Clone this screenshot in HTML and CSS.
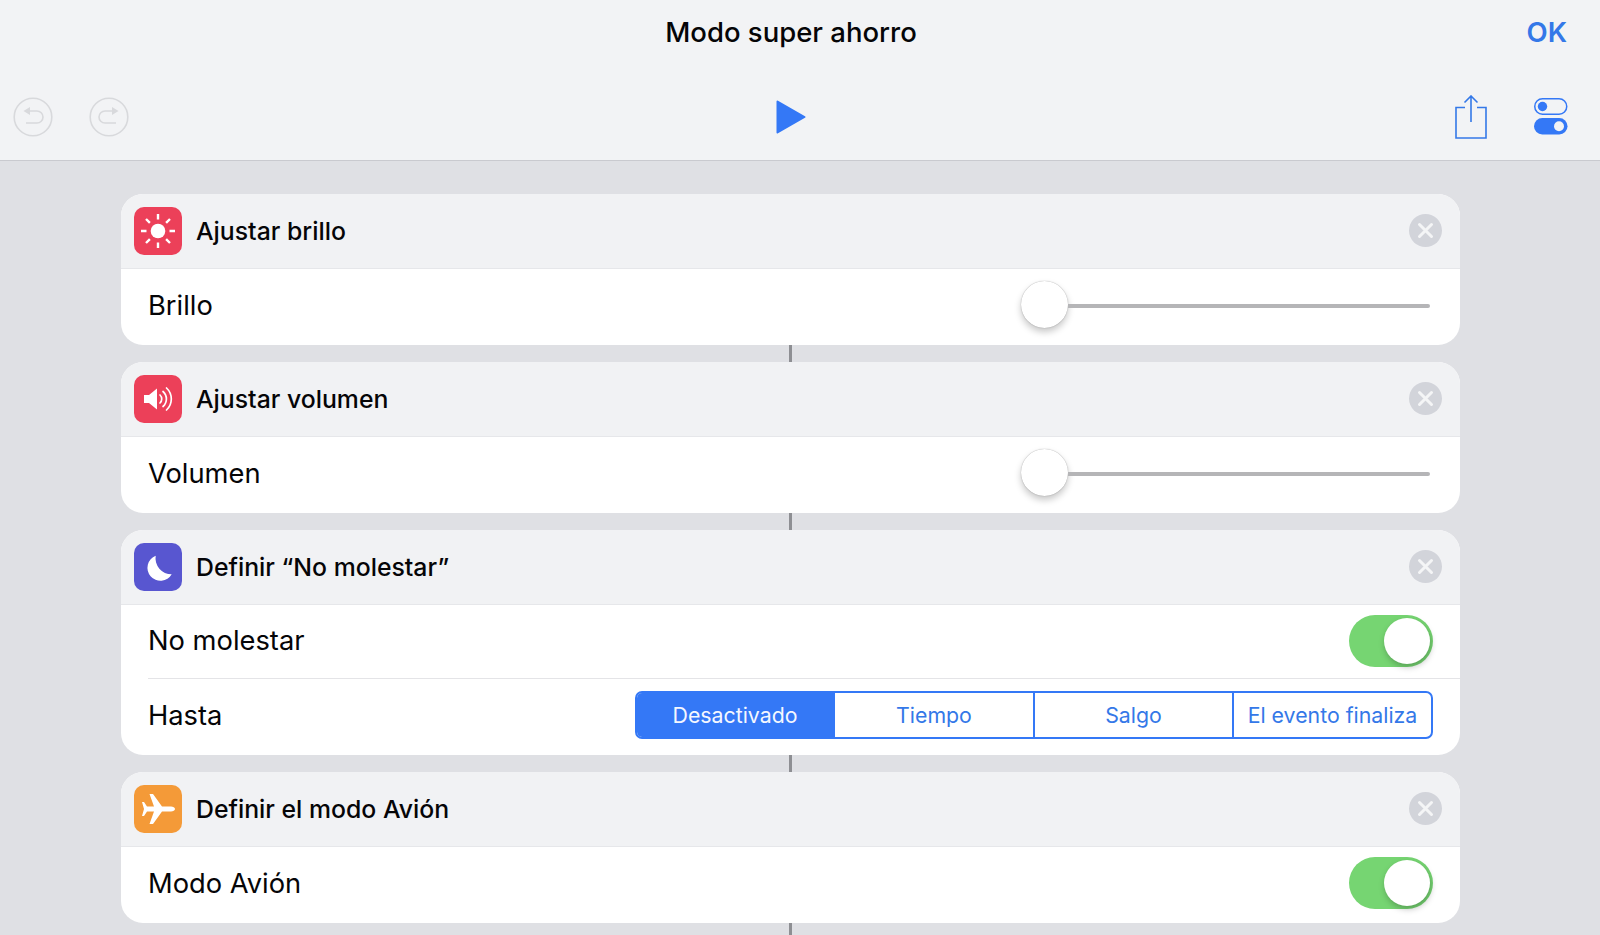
FILE: index.html
```html
<!DOCTYPE html>
<html lang="es">
<head>
    <meta charset="UTF-8">
    <meta name="viewport" content="width=device-width, initial-scale=1.0">
    <title>Modo super ahorro</title>
    <link rel="stylesheet" href="styles.css">
</head>
<body>
    <header class="top-bar">
        <div class="title-row">
            <h1 class="title">Modo super ahorro</h1>
            <span class="done">OK</span>
        </div>
        <div class="tool-row">
            <div class="tools-left">
                <svg class="history" viewBox="0 0 40 40">
                    <circle cx="20" cy="20" r="18.8"/>
                    <path d="M16 14H24a6 6 0 0 1 0 12H13"/>
                    <polygon class="history-head" points="10.5,14 17,10 17,18"/>
                </svg>
                <svg class="history" viewBox="0 0 40 40">
                    <circle cx="20" cy="20" r="18.8"/>
                    <path d="M24 14H16a6 6 0 0 0 0 12H27"/>
                    <polygon class="history-head" points="29.5,14 23,10 23,18"/>
                </svg>
            </div>
            <svg class="play" viewBox="0 0 30 34">
                <polygon points="1.5,1.5 28.5,17 1.5,32.5"/>
            </svg>
            <div class="tools-right">
                <svg class="share" viewBox="0 0 32 44">
                    <path d="M10 12.5H1V43H31V12.5H22M16 1V27M9.5 7.5L16 1L22.5 7.5"/>
                </svg>
                <svg class="settings" viewBox="0 0 34 37">
                    <rect class="pill-line" x="0.75" y="0.75" width="32" height="15.5" rx="7.75"/>
                    <circle class="dot-blue" cx="8.5" cy="8.5" r="4.7"/>
                    <rect class="dot-blue" x="0" y="20" width="33.5" height="16.5" rx="8.25"/>
                    <circle class="dot-white" cx="25" cy="28.2" r="5"/>
                </svg>
            </div>
        </div>
    </header>

    <main class="workflow">
        <section class="card">
            <div class="card-head">
                <svg class="app-icon red" viewBox="0 0 48 48">
                    <circle class="fill-white" cx="24" cy="24" r="7.3"/>
                    <path class="line-white" d="M24 7V12.5M24 35.5V41M7 24H12.5M35.5 24H41M12 12L15.9 15.900M32.100 32.100L36 36M36 12L32.100 15.900M15.900 32.100L12 36"/>
                </svg>
                <span class="card-title">Ajustar brillo</span>
                <span class="close"><svg viewBox="0 0 33 33"><path d="M10.5 10.5L22.5 22.5M22.5 10.5L10.5 22.5"/></svg></span>
            </div>
            <div class="row">
                <span class="row-label">Brillo</span>
                <div class="slider"><span class="knob"></span><span class="track"></span></div>
            </div>
        </section>
        <div class="link"></div>

        <section class="card">
            <div class="card-head">
                <svg class="app-icon red" viewBox="0 0 48 48">
                    <path class="fill-white" d="M10 20H15L23 13.5V34.5L15 28H10Z"/>
                    <path class="line-thin" d="M26 20a5.500 5.500 0 0 1 0 8M29 16.500a10 10 0 0 1 0 15M32.500 13a15 15 0 0 1 0 22"/>
                </svg>
                <span class="card-title">Ajustar volumen</span>
                <span class="close"><svg viewBox="0 0 33 33"><path d="M10.5 10.5L22.5 22.5M22.5 10.5L10.5 22.5"/></svg></span>
            </div>
            <div class="row">
                <span class="row-label">Volumen</span>
                <div class="slider"><span class="knob"></span><span class="track"></span></div>
            </div>
        </section>
        <div class="link"></div>

        <section class="card">
            <div class="card-head">
                <svg class="app-icon purple" viewBox="0 0 48 48">
                    <path class="fill-white" d="M21.700 12.700A13 13 0 1 0 37.700 31.300A16 16 0 0 1 21.700 12.700Z"/>
                </svg>
                <span class="card-title">Definir “No molestar”</span>
                <span class="close"><svg viewBox="0 0 33 33"><path d="M10.5 10.5L22.5 22.5M22.5 10.5L10.5 22.5"/></svg></span>
            </div>
            <div class="row row-split">
                <span class="row-label">No molestar</span>
                <span class="switch"><span class="switch-knob"></span></span>
            </div>
            <div class="row">
                <span class="row-label">Hasta</span>
                <div class="segments">
                    <span class="segment active">Desactivado</span>
                    <span class="segment">Tiempo</span>
                    <span class="segment">Salgo</span>
                    <span class="segment">El evento finaliza</span>
                </div>
            </div>
        </section>
        <div class="link"></div>

        <section class="card">
            <div class="card-head">
                <svg class="app-icon orange" viewBox="0 0 48 48">
                    <path class="fill-white" d="M41 24c0-1.500-2-2.500-4-2.500H28L19 9H15.500L20 21.500H13L10 17H8L10 24L8 31H10L13 26.500H20L15.500 39H19L28 26.500H37C39 26.500 41 25.500 41 24Z"/>
                </svg>
                <span class="card-title">Definir el modo Avión</span>
                <span class="close"><svg viewBox="0 0 33 33"><path d="M10.5 10.5L22.5 22.5M22.5 10.5L10.5 22.5"/></svg></span>
            </div>
            <div class="row">
                <span class="row-label">Modo Avión</span>
                <span class="switch"><span class="switch-knob"></span></span>
            </div>
        </section>
        <div class="link"></div>
    </main>
</body>
</html>
```

FILE: styles.css
```css
html, body { margin: 0; height: 935px; overflow: hidden; }
body { background: #dfe0e4; font-family: Inter, "Liberation Sans", sans-serif; color: #050507; }

.top-bar { height: 161px; box-sizing: border-box; background: #f2f3f5; border-bottom: 1px solid #c9cacf; display: flex; flex-direction: column; }
.title-row { height: 63px; padding-right: 18px; display: flex; align-items: center; justify-content: center; position: relative; }
.title { margin: 0; font-size: 27.5px; font-weight: 500; }
.done { position: absolute; right: 33px; top: 15px; font-size: 27.5px; font-weight: 600; color: #3478e8; }

.tool-row { flex: 1; display: grid; grid-template-columns: 1fr auto 1fr; align-items: center; padding: 0 32px 0 13px; margin-top: 10px; }
.tools-left { display: flex; gap: 36px; }
.tools-right { display: flex; justify-content: flex-end; align-items: center; gap: 47px; }
.history { width: 40px; height: 40px; }
.history circle, .history path { fill: none; stroke: #d8d9dc; stroke-width: 1.6; }
.history-head { fill: #d8d9dc; }
.play { width: 30px; height: 34px; }
.play polygon { fill: #3478f6; stroke: #3478f6; stroke-width: 2; stroke-linejoin: round; }
.share { width: 32px; height: 44px; }
.share path { fill: none; stroke: #3478e8; stroke-width: 1.6; }
.settings { width: 34px; height: 37px; }
.pill-line { fill: none; stroke: #3478f6; stroke-width: 1.5; }
.dot-blue { fill: #3478f6; }
.dot-white { fill: #f2f3f5; }

.workflow { padding: 33px 140px 0 121px; display: flex; flex-direction: column; }
.link { width: 3px; height: 17px; background: #8e8f93; flex: none; align-self: center; margin-left: -1px; }

.card { background: #fff; border-radius: 22px; overflow: hidden; flex: none; }
.card-head { height: 74px; background: #f1f2f4; border-bottom: 1px solid #e6e7ea; display: flex; align-items: center; padding: 0 18px 0 13px; }
.app-icon { width: 48px; height: 48px; border-radius: 10px; flex: none; }
.red { background: #ec4059; }
.purple { background: #5856d0; }
.orange { background: #f49a38; }
.fill-white { fill: #fff; }
.line-white { fill: none; stroke: #fff; stroke-width: 2.4; }
.line-thin { fill: none; stroke: #fff; stroke-width: 1.7; stroke-linecap: round; }
.card-title { margin-left: 14px; font-size: 24.8px; font-weight: 500; flex: 1; }
.close { width: 33px; height: 33px; margin-top: -2px; border-radius: 50%; background: #d2d4da; flex: none; }
.close svg { display: block; width: 33px; height: 33px; }
.close path { fill: none; stroke: #f4f5f6; stroke-width: 3; stroke-linecap: round; }

.row { height: 76px; margin-left: 27px; padding-right: 27px; display: flex; align-items: center; justify-content: space-between; }
.row-split { height: 73px; border-bottom: 1px solid #e4e4e7; }
.row-label { font-size: 27.3px; margin-top: -4px; }
.row-split .row-label { margin-top: -2px; }

.slider { width: 409px; margin: -3px 3px 0 0; display: flex; align-items: center; }
.knob { width: 47px; height: 47px; margin-top: -3px; border-radius: 50%; background: #fff; flex: none; box-shadow: 0 0 1px rgba(0, 0, 0, 0.4), 0 4px 7px rgba(0, 0, 0, 0.22); }
.track { flex: 1; height: 4px; background: #b5b5b7; border-radius: 0 2px 2px 0; }

.switch { width: 84px; height: 52px; margin-top: -4px; border-radius: 26px; background: #76d572; display: flex; justify-content: flex-end; align-items: center; padding-right: 3px; box-sizing: border-box; }
.row-split .switch { margin-top: -2px; }
.switch-knob { width: 46px; height: 46px; border-radius: 50%; background: #fff; box-shadow: 1px 3px 6px rgba(0, 0, 0, 0.25); }

.segments { width: 798px; height: 48px; box-sizing: border-box; border: 2px solid #3478f6; border-radius: 7px; display: grid; grid-template-columns: 196px 200px 199px 1fr; overflow: hidden; margin-top: -4px; }
.segment { display: flex; align-items: center; justify-content: center; font-size: 21.3px; color: #3478e8; border-left: 2px solid #3478f6; }
.segment:first-child { border-left: none; }
.active { background: #3478f6; color: #f4f7ff; }
```
